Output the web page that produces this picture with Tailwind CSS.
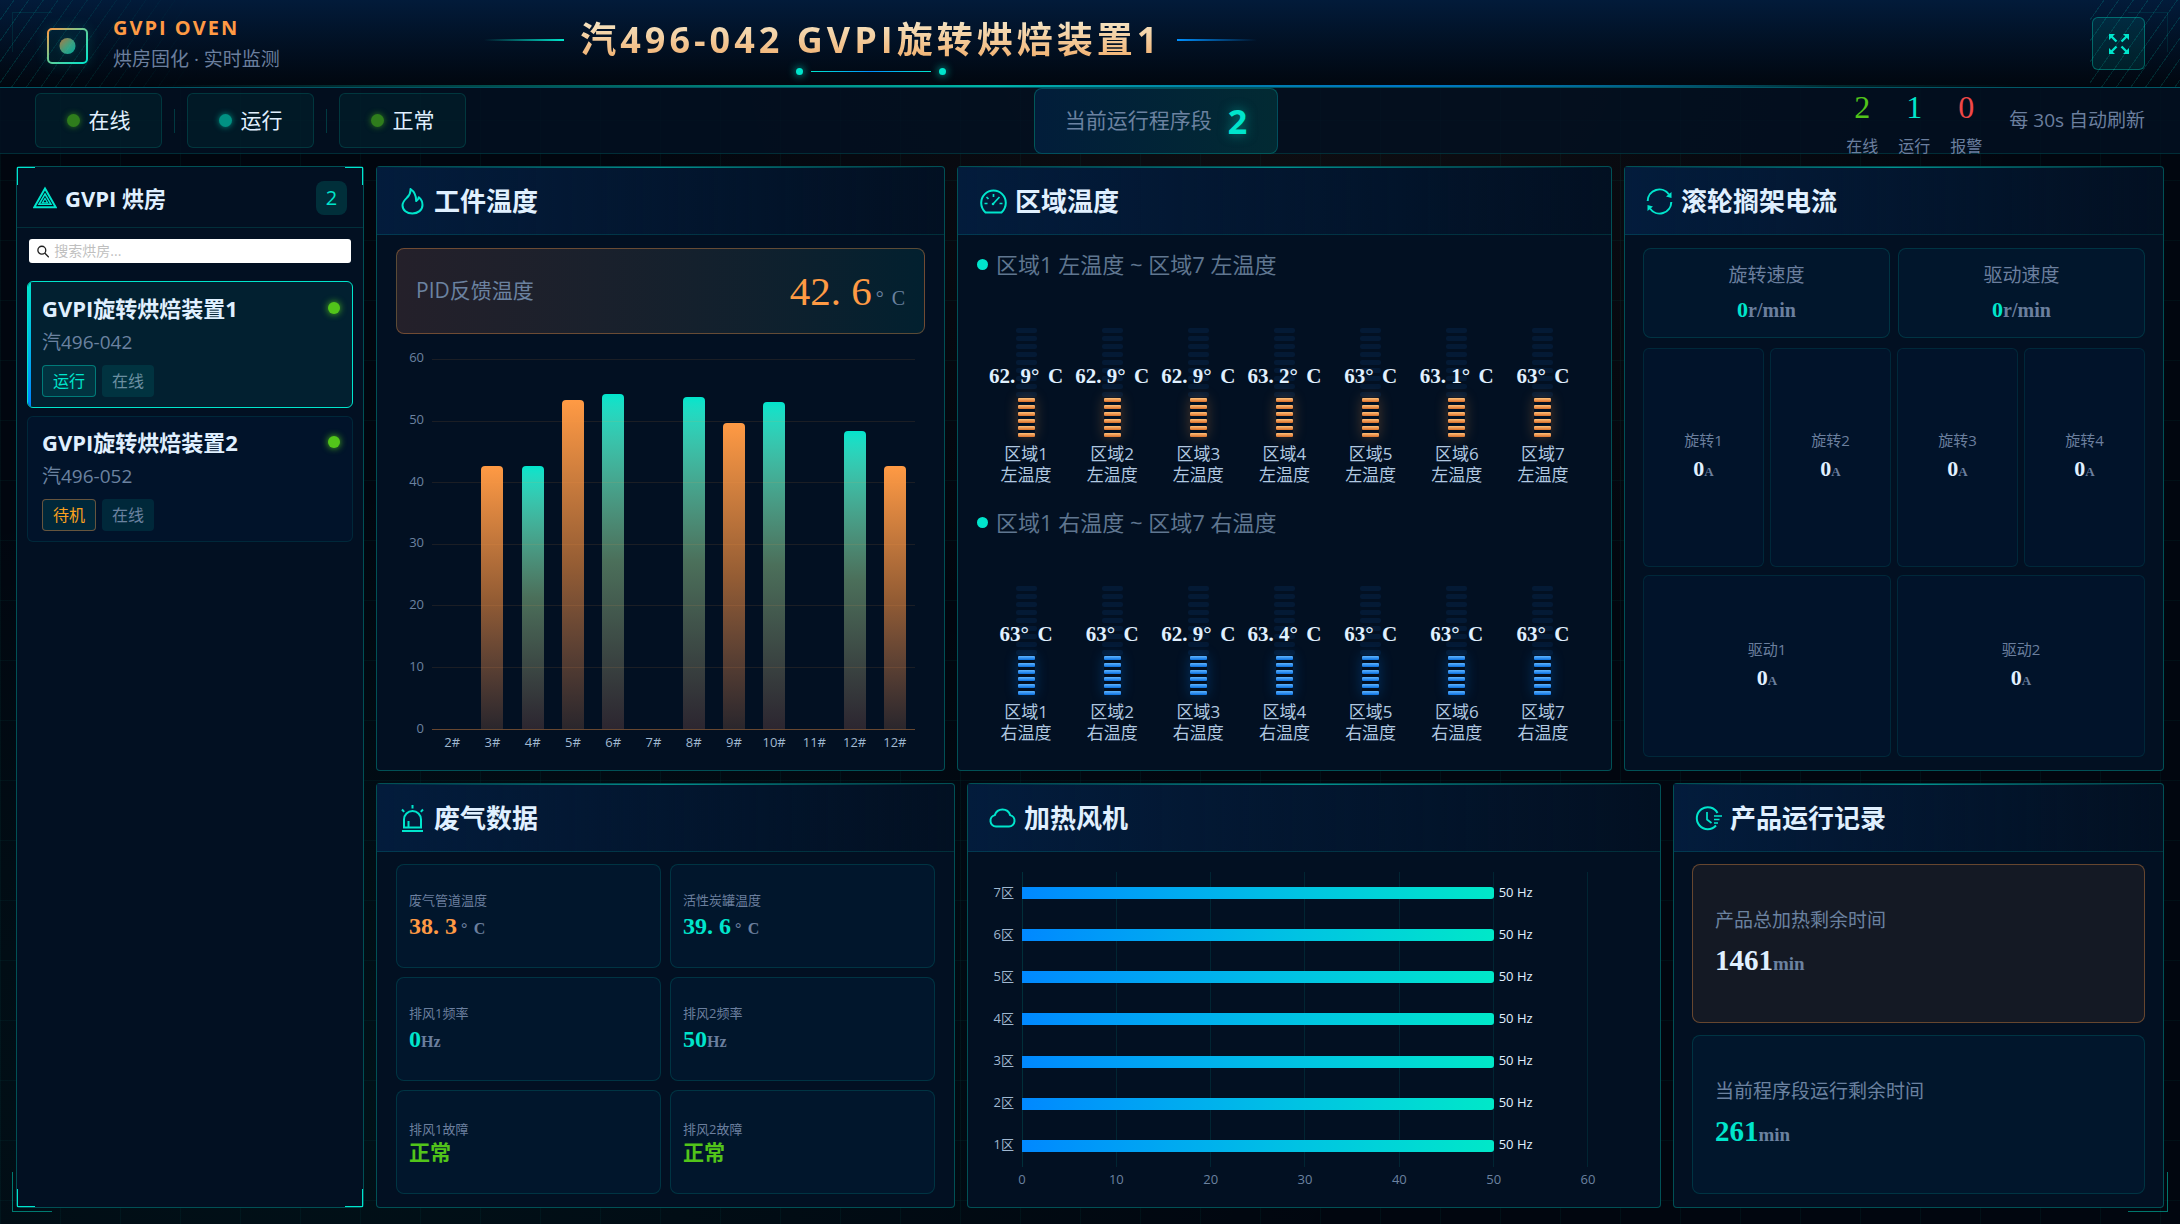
<!DOCTYPE html>
<html lang="zh-CN">
<head>
  <meta charset="UTF-8">
  <meta name="viewport" content="width=device-width, initial-scale=1.0">
  <title>GVPI 烘房固化 · 实时监测</title>
  <script src="https://cdn.jsdelivr.net/npm/@tailwindcss/browser@4"></script>
</head>
<body class="relative flex min-h-screen flex-col overflow-x-hidden bg-[#01060f] bg-[linear-gradient(rgba(0,229,204,0.045)_1px,transparent_1px),linear-gradient(90deg,rgba(0,229,204,0.045)_1px,transparent_1px),radial-gradient(ellipse_at_15%_90%,rgba(0,229,204,0.05),transparent_40%),radial-gradient(ellipse_at_60%_0%,rgba(255,154,68,0.06),transparent_40%)] bg-[size:60px_60px,60px_60px,100%_100%,100%_100%] font-['Open_Sans','Noto_Sans_CJK_SC',sans-serif] text-[#e0f0ff]">

  <!-- Header -->
  <header class="relative grid h-[88px] shrink-0 grid-cols-[33fr_auto_67fr] items-center border-b border-[#00e5cc]/30 bg-gradient-to-b from-[#021b3a] to-[#01070f] pr-[35px] pl-[47px]">
    <div class="absolute inset-y-0 left-0 w-[200px] bg-[repeating-linear-gradient(125deg,transparent_0_11px,rgba(0,229,204,0.14)_11px_12px)] [mask-image:linear-gradient(90deg,#000,transparent)]"></div>
    <div class="absolute inset-y-0 right-0 w-[90px] bg-[repeating-linear-gradient(125deg,transparent_0_11px,rgba(0,229,204,0.14)_11px_12px)]"></div>
    <div class="absolute inset-x-[7%] bottom-0 h-[2px] bg-gradient-to-r from-transparent via-[#00b8a9] via-45% to-transparent"></div>
    <div class="absolute right-[16%] bottom-0 left-[45%] h-[2px] bg-gradient-to-r from-transparent via-[#0077c8] to-transparent"></div>

    <div class="relative flex items-center gap-[25px]">
      <svg class="mt-1 h-[36px] w-[41px] drop-shadow-[0_0_6px_rgba(0,229,204,0.4)]" viewBox="0 0 41 36" fill="none">
        <defs>
          <linearGradient id="logo" x1="0" y1="0" x2="1" y2="1">
            <stop offset="0" stop-color="#ff9a44"/>
            <stop offset="0.5" stop-color="#5fcf9a"/>
            <stop offset="1" stop-color="#00e5cc"/>
          </linearGradient>
        </defs>
        <rect x="1" y="1" width="39" height="34" rx="4" stroke="url(#logo)" stroke-width="2"/>
        <circle cx="20.500" cy="18" r="8" fill="url(#logo)" opacity="0.7"/>
      </svg>
      <div class="pt-[2px]">
        <div class="text-[20px] leading-[28px] font-bold tracking-[2px] text-[#ff9a44]">GVPI OVEN</div>
        <div class="text-[19px] leading-[34px] text-[#6b7f9e]">烘房固化 · 实时监测</div>
      </div>
    </div>

    <div class="relative flex h-full flex-col items-center">
      <div class="mt-[15px] flex items-center gap-4">
        <span class="h-[2px] w-[80px] bg-gradient-to-r from-transparent to-[#00e5cc]"></span>
        <h1 class="bg-gradient-to-b from-[#f4ecd0] to-[#f0a860] bg-clip-text text-[36px] leading-[50px] font-bold tracking-[4px] text-transparent">汽496-042 GVPI旋转烘焙装置1</h1>
        <span class="h-[2px] w-[80px] bg-gradient-to-r from-[#0090ff] to-transparent"></span>
      </div>
      <div class="mt-[3px] flex items-center gap-2">
        <span class="size-[7px] rounded-full bg-[#00e5cc] shadow-[0_0_8px_#00e5cc]"></span>
        <span class="h-px w-[120px] bg-gradient-to-r from-[#00e5cc] via-[#0090ff] to-[#00e5cc]"></span>
        <span class="size-[7px] rounded-full bg-[#00e5cc] shadow-[0_0_8px_#00e5cc]"></span>
      </div>
    </div>

    <button type="button" aria-label="全屏" class="relative flex size-[53px] items-center justify-center justify-self-end rounded-md border border-[#00e5cc]/35 bg-[#00e5cc]/10 text-[#00e5cc]">
      <svg class="size-[22px]" viewBox="0 0 22 22" fill="currentColor" stroke="currentColor" stroke-width="2.400">
        <path d="M3.500 3.500l5 5M18.500 3.500l-5 5M3.500 18.500l5-5M18.500 18.500l-5-5" fill="none"/>
        <path d="M1 1h6L1 7zM21 1v6l-6-6zM1 21v-6l6 6zM21 21h-6l6-6z" stroke="none"/>
      </svg>
    </button>
  </header>

  <!-- Status bar -->
  <section class="grid h-[66px] shrink-0 grid-cols-[1fr_auto_1fr] grid-rows-[65px] items-center border-b border-[#00e5cc]/15 bg-[#021022]/80 px-[35px]">
    <div class="flex items-center gap-3">
      <div class="flex h-[55px] w-[127px] items-center justify-center gap-[9px] rounded-md border border-[#00e5cc]/15 bg-[#00e5cc]/5 text-[21px]">
        <span class="size-[13px] rounded-full bg-[#2f7d1c] shadow-[0_0_6px_#2f7d1c]"></span>在线
      </div>
      <span class="h-6 w-px bg-[#00e5cc]/20"></span>
      <div class="flex h-[55px] w-[127px] items-center justify-center gap-[9px] rounded-md border border-[#00e5cc]/15 bg-[#00e5cc]/5 text-[21px]">
        <span class="size-[13px] rounded-full bg-[#019183] shadow-[0_0_6px_#019183]"></span>运行
      </div>
      <span class="h-6 w-px bg-[#00e5cc]/20"></span>
      <div class="flex h-[55px] w-[127px] items-center justify-center gap-[9px] rounded-md border border-[#00e5cc]/15 bg-[#00e5cc]/5 text-[21px]">
        <span class="size-[13px] rounded-full bg-[#2f7d1c] shadow-[0_0_6px_#2f7d1c]"></span>正常
      </div>
    </div>

    <div class="ml-[132px] flex h-[66px] w-[244px] items-center justify-center gap-4 rounded-lg border border-[#00e5cc]/25 bg-gradient-to-r from-[#021d3a] to-[#022a33]">
      <span class="text-[21px] text-[#6b82a0]">当前运行程序段</span>
      <span class="text-[34px] leading-none font-bold text-[#00e5cc] [text-shadow:0_0_12px_rgba(0,229,204,0.5)]">2</span>
    </div>

    <div class="flex items-center justify-end gap-[27px]">
      <div class="flex gap-5 text-center">
        <div>
          <div class="font-['Liberation_Serif',serif] text-[32px] leading-[50px] text-[#52c41a]">2</div>
          <div class="text-[16px] leading-[28px] text-[#6b7f9e]">在线</div>
        </div>
        <div>
          <div class="font-['Liberation_Serif',serif] text-[32px] leading-[50px] text-[#00e5cc]">1</div>
          <div class="text-[16px] leading-[28px] text-[#6b7f9e]">运行</div>
        </div>
        <div>
          <div class="font-['Liberation_Serif',serif] text-[32px] leading-[50px] text-[#f04848]">0</div>
          <div class="text-[16px] leading-[28px] text-[#6b7f9e]">报警</div>
        </div>
      </div>
      <span class="text-[19px] text-[#6b7f9e]">每 30s 自动刷新</span>
    </div>
  </section>

  <main class="flex flex-1 gap-3 px-4 pt-3 pb-4">

    <!-- Sidebar -->
    <aside class="relative flex w-[348px] shrink-0 flex-col rounded border border-[#00e5cc]/30 bg-[#021022]">
      <span class="absolute top-0 left-0 size-[18px] border-t border-l border-[#00e5cc]"></span>
      <span class="absolute top-0 right-0 size-[18px] border-t border-r border-[#00e5cc]"></span>
      <span class="absolute bottom-0 left-0 size-[18px] border-b border-l border-[#00e5cc]"></span>
      <span class="absolute right-0 bottom-0 size-[18px] border-r border-b border-[#00e5cc]"></span>
      <div class="flex h-[61px] items-center gap-2 border-b border-[#00e5cc]/15 px-4 pt-[2px]">
        <svg class="size-6" viewBox="0 0 24 24" fill="none" stroke="#00e5cc">
          <path d="M12 2.500L22.700 21.200H1.300z" stroke-width="2"/>
          <path d="M12 8l6 10.300H6z" stroke-width="1.500"/>
          <path d="M12 12.500l2.600 4.300H9.400z" stroke-width="1.300"/>
        </svg>
        <h2 class="text-[22px] font-bold">GVPI 烘房</h2>
        <span class="ml-auto flex h-[34px] w-[31px] items-center justify-center rounded-lg bg-[#00e5cc]/15 text-[20px] text-[#00e5cc]">2</span>
      </div>
      <label class="mx-3 mt-[11px] flex h-6 items-center gap-[5px] rounded-[3px] bg-white pl-2">
        <svg class="size-[13px]" viewBox="0 0 14 14" fill="none" stroke="#1f1f1f" stroke-width="1.500">
          <circle cx="5.500" cy="5.500" r="4.500"/>
          <path d="M9 9l4.500 4.500"/>
        </svg>
        <input type="search" aria-label="搜索烘房" placeholder="搜索烘房..." class="w-full bg-transparent text-[14px] leading-5 text-gray-800 outline-none placeholder:text-[#bfbfbf]">
      </label>

      <div class="mx-[10px] mt-[18px] flex flex-col gap-2">
        <a href="#" class="relative block h-[127px] overflow-hidden rounded-md border border-[#00e5cc] bg-[#022030] pt-[9px] pr-[12px] pl-[14px]">
          <span class="absolute inset-y-0 left-0 w-[3px] bg-gradient-to-b from-[#00e5cc] to-[#0080ff]"></span>
          <div class="flex items-center justify-between">
            <span class="text-[22px] leading-[34px] font-bold">GVPI旋转烘焙装置1</span>
            <span class="size-3 rounded-full bg-[#52c41a] shadow-[0_0_7px_#52c41a]"></span>
          </div>
          <div class="text-[19px] leading-[34px] text-[#6b82a0]">汽496-042</div>
          <div class="mt-[6px] flex gap-[6px] text-[16px]">
            <span class="flex h-8 w-[54px] items-center justify-center rounded border border-[#00e5cc]/40 bg-[#00e5cc]/10 text-[#00e5cc]">运行</span>
            <span class="flex h-8 w-[52px] items-center justify-center rounded bg-[#00e5cc]/10 text-[#6b8fa0]">在线</span>
          </div>
        </a>
        <a href="#" class="relative block h-[126px] rounded-md border border-[#00e5cc]/10 bg-[#01132a] pt-[8px] pr-[12px] pl-[14px]">
          <div class="flex items-center justify-between">
            <span class="text-[22px] leading-[34px] font-bold">GVPI旋转烘焙装置2</span>
            <span class="size-3 rounded-full bg-[#52c41a] shadow-[0_0_7px_#52c41a]"></span>
          </div>
          <div class="text-[19px] leading-[34px] text-[#6b82a0]">汽496-052</div>
          <div class="mt-[6px] flex gap-[6px] text-[16px]">
            <span class="flex h-8 w-[54px] items-center justify-center rounded border border-[#ff9a44]/40 bg-[#00e5cc]/10 text-[#faa01e]">待机</span>
            <span class="flex h-8 w-[52px] items-center justify-center rounded bg-[#00e5cc]/10 text-[#6b82a0]">在线</span>
          </div>
        </a>
      </div>
    </aside>

    <div class="grid min-w-0 flex-1 grid-rows-[605fr_425fr] gap-3">
      <div class="grid grid-cols-[569fr_655fr_540fr] gap-3">

        <!-- Workpiece temperature -->
        <section class="relative flex min-w-0 flex-col rounded border border-[#00e5cc]/30 bg-[#021022]">
          <span class="absolute inset-x-0 top-0 h-px bg-gradient-to-r from-transparent via-[#00e5cc]/60 to-transparent"></span>
          <header class="flex h-[68px] items-center gap-2 border-b border-[#00e5cc]/15 bg-gradient-to-r from-[#031c3c] to-transparent px-[22px] pt-[2px]">
            <svg class="size-[27px]" viewBox="0 0 27 27" fill="none" stroke="#00e5cc" stroke-width="2" stroke-linejoin="round">
              <path d="M11.500 1c.4 4.200-1.200 6.400-3.600 8.800C5.300 12.300 3.500 14 3.500 17.200c0 5 4.300 8.300 9.900 8.300s10.100-3.500 10.100-8.600c0-3.200-1.500-6-3.700-7.700-.3 1.700-1 3-2.600 3.800C17.200 8 15.300 3.500 11.500 1z"/>
            </svg>
            <h2 class="text-[26px] font-bold">工件温度</h2>
          </header>
          <div class="flex flex-1 flex-col px-[19px] pt-[13px] pb-[18px]">
            <div class="flex h-[86px] items-center justify-between rounded-lg border border-[#ff9a44]/35 bg-gradient-to-r from-[#24202a] to-[#02202f] px-[19px]">
              <span class="text-[21px] text-[#6b82a0]">PID反馈温度</span>
              <span class="font-['Liberation_Serif',serif] text-[41px] leading-none text-[#ff9a44]">42<span class="inline-block w-[0.5em]">.</span>6<span class="ml-[4px] text-[20px] text-[#6b82a0]"><span class="inline-block w-[0.8em]">°</span>C</span></span>
            </div>
            <div class="mt-[25px] flex flex-1 gap-2 pr-[10px] pl-[8px]">
              <div class="-mt-[12px] mb-[14px] flex w-[20px] flex-col justify-between text-right text-[13px] leading-5 text-[#6b82a0]">
                <span>60</span><span>50</span><span>40</span><span>30</span><span>20</span><span>10</span><span>0</span>
              </div>
              <div class="flex min-w-0 flex-1 flex-col">
                <div class="relative flex-1 border-b border-[#ff9a44]/40">
                  <div id="tempBars" class="grid h-full grid-cols-12"></div>
                  <div class="absolute inset-0 flex flex-col justify-between">
                    <i class="h-px bg-[#ff9a44]/10"></i><i class="h-px bg-[#ff9a44]/10"></i><i class="h-px bg-[#ff9a44]/10"></i><i class="h-px bg-[#ff9a44]/10"></i><i class="h-px bg-[#ff9a44]/10"></i><i class="h-px bg-[#ff9a44]/10"></i><i class="h-px"></i>
                  </div>
                </div>
                <div id="tempNames" class="grid h-[22px] grid-cols-12 pt-[2px] text-center text-[13px] leading-5 text-[#a0b8d0]"></div>
              </div>
            </div>
          </div>
        </section>

        <!-- Zone temperature -->
        <section class="relative flex min-w-0 flex-col rounded border border-[#00e5cc]/30 bg-[#021022]">
          <span class="absolute inset-x-0 top-0 h-px bg-gradient-to-r from-transparent via-[#00e5cc]/60 to-transparent"></span>
          <header class="flex h-[68px] items-center gap-2 border-b border-[#00e5cc]/15 bg-gradient-to-r from-[#031c3c] to-transparent px-[22px] pt-[2px]">
            <svg class="size-[27px]" viewBox="0 0 27 27" fill="none" stroke="#00e5cc" stroke-width="2" stroke-linejoin="round">
              <path d="M5.500 24.500C2.800 22 1.200 18.600 1.200 14.800 1.200 8 6.700 2.500 13.500 2.500S25.800 8 25.800 14.800c0 3.800-1.600 7.200-4.300 9.700z"/>
              <path d="M13.500 6v3M6.500 9l2 2M4.500 15.500h3M19.500 15.500h3M13 16l6.500-7" stroke-width="1.700"/>
              <circle cx="13" cy="16" r="1.300" fill="#00e5cc" stroke="none"/>
            </svg>
            <h2 class="text-[26px] font-bold">区域温度</h2>
          </header>
          <div class="flex flex-1 flex-col px-[19px] pt-[13px] pb-[6px]">
            <div class="flex flex-1 flex-col">
              <h3 class="flex h-[33px] items-center gap-2 text-[22px] text-[#5f7690]"><span class="size-[11px] rounded-full bg-[#00e5cc]"></span>区域1 左温度 ~ 区域7 左温度</h3>
              <div id="leftZones" class="grid flex-1 grid-cols-7 items-end px-[6px] pb-[21px]"></div>
            </div>
            <div class="flex flex-1 flex-col">
              <h3 class="flex h-[33px] items-center gap-2 text-[22px] text-[#5f7690]"><span class="size-[11px] rounded-full bg-[#00e5cc]"></span>区域1 右温度 ~ 区域7 右温度</h3>
              <div id="rightZones" class="grid flex-1 grid-cols-7 items-end px-[6px] pb-[21px]"></div>
            </div>
          </div>
        </section>

        <!-- Roller current -->
        <section class="relative flex min-w-0 flex-col rounded border border-[#00e5cc]/30 bg-[#021022]">
          <span class="absolute inset-x-0 top-0 h-px bg-gradient-to-r from-transparent via-[#00e5cc]/60 to-transparent"></span>
          <header class="flex h-[68px] items-center gap-2 border-b border-[#00e5cc]/15 bg-gradient-to-r from-[#031c3c] to-transparent px-[21px] pt-[2px]">
            <svg class="size-[27px]" viewBox="0 0 27 27" fill="none" stroke="#00e5cc" stroke-width="2">
              <path d="M1.700 13A11.700 11.700 0 0 1 23 6.500M25.300 14A11.700 11.700 0 0 1 4 20.500"/>
              <path d="M25.500 4v6l-5.500-1.500zM1.500 23v-6L7 18.500z" fill="#00e5cc" stroke="none"/>
            </svg>
            <h2 class="text-[26px] font-bold">滚轮搁架电流</h2>
          </header>
          <div class="flex flex-1 flex-col px-[18px] pt-[13px] pb-[13px]">
            <div class="mb-[10px] grid h-[90px] grid-cols-2 gap-2 text-center">
              <div class="rounded-lg border border-[#00e5cc]/15 bg-[#01162c] pt-[10px]">
                <div class="text-[19px] leading-[32px] text-[#6b7f9e]">旋转速度</div>
                <div class="font-['Liberation_Serif',serif] text-[22px] leading-[38px] font-bold text-[#00e5cc]">0<span class="text-[20px] text-[#6b7f9e]">r/min</span></div>
              </div>
              <div class="rounded-lg border border-[#00e5cc]/15 bg-[#01162c] pt-[10px]">
                <div class="text-[19px] leading-[32px] text-[#6b7f9e]">驱动速度</div>
                <div class="font-['Liberation_Serif',serif] text-[22px] leading-[38px] font-bold text-[#00e5cc]">0<span class="text-[20px] text-[#6b7f9e]">r/min</span></div>
              </div>
            </div>
            <div id="currents" class="grid flex-1 grid-cols-4 grid-rows-[220fr_182fr] gap-x-[6px] gap-y-2"></div>
          </div>
        </section>
      </div>

      <div class="grid grid-cols-[579fr_694fr_491fr] gap-3">

        <!-- Exhaust -->
        <section class="relative flex min-w-0 flex-col rounded border border-[#00e5cc]/30 bg-[#021022]">
          <span class="absolute inset-x-0 top-0 h-px bg-gradient-to-r from-transparent via-[#00e5cc]/60 to-transparent"></span>
          <header class="flex h-[68px] items-center gap-2 border-b border-[#00e5cc]/15 bg-gradient-to-r from-[#031c3c] to-transparent px-[22px] pt-[2px]">
            <svg class="size-[27px]" viewBox="0 0 27 27" fill="none" stroke="#00e5cc" stroke-width="2">
              <path d="M5 22.500V14.500a8.500 8.500 0 0 1 17 0v8z"/>
              <path d="M3 25.900h21M13.500 0v3.500M3 4.500l2.200 2.400M24 4.500l-2.200 2.400M9.500 22.500V16"/>
            </svg>
            <h2 class="text-[26px] font-bold">废气数据</h2>
          </header>
          <div class="grid flex-1 grid-cols-2 grid-rows-3 gap-[9px] px-[19px] pt-[12px] pb-[13px]">
            <div class="flex flex-col justify-center rounded-lg border border-[#00e5cc]/15 bg-[#01162c] px-3">
              <div class="text-[13px] leading-[22px] text-[#6b7f9e]">废气管道温度</div>
              <div class="font-['Liberation_Serif',serif] text-[24px] leading-[30px] font-bold text-[#ff9a44]">38<span class="inline-block w-[0.5em]">.</span>3<span class="ml-1 text-[16px] text-[#6b7f9e]"><span class="inline-block w-[0.8em]">°</span>C</span></div>
            </div>
            <div class="flex flex-col justify-center rounded-lg border border-[#00e5cc]/15 bg-[#01162c] px-3">
              <div class="text-[13px] leading-[22px] text-[#6b7f9e]">活性炭罐温度</div>
              <div class="font-['Liberation_Serif',serif] text-[24px] leading-[30px] font-bold text-[#00e5cc]">39<span class="inline-block w-[0.5em]">.</span>6<span class="ml-1 text-[16px] text-[#6b7f9e]"><span class="inline-block w-[0.8em]">°</span>C</span></div>
            </div>
            <div class="flex flex-col justify-center rounded-lg border border-[#00e5cc]/15 bg-[#01162c] px-3">
              <div class="text-[13px] leading-[22px] text-[#6b7f9e]">排风1频率</div>
              <div class="font-['Liberation_Serif',serif] text-[24px] leading-[30px] font-bold text-[#00e5cc]">0<span class="text-[16px] text-[#6b7f9e]">Hz</span></div>
            </div>
            <div class="flex flex-col justify-center rounded-lg border border-[#00e5cc]/15 bg-[#01162c] px-3">
              <div class="text-[13px] leading-[22px] text-[#6b7f9e]">排风2频率</div>
              <div class="font-['Liberation_Serif',serif] text-[24px] leading-[30px] font-bold text-[#00e5cc]">50<span class="text-[16px] text-[#6b7f9e]">Hz</span></div>
            </div>
            <div class="flex flex-col justify-center rounded-lg border border-[#00e5cc]/15 bg-[#01162c] px-3 pb-[2px]">
              <div class="text-[13px] leading-[22px] text-[#6b7f9e]">排风1故障</div>
              <div class="text-[21px] leading-[24px] font-bold text-[#52c41a]">正常</div>
            </div>
            <div class="flex flex-col justify-center rounded-lg border border-[#00e5cc]/15 bg-[#01162c] px-3 pb-[2px]">
              <div class="text-[13px] leading-[22px] text-[#6b7f9e]">排风2故障</div>
              <div class="text-[21px] leading-[24px] font-bold text-[#52c41a]">正常</div>
            </div>
          </div>
        </section>

        <!-- Heating fans -->
        <section class="relative flex min-w-0 flex-col rounded border border-[#00e5cc]/30 bg-[#021022]">
          <span class="absolute inset-x-0 top-0 h-px bg-gradient-to-r from-transparent via-[#00e5cc]/60 to-transparent"></span>
          <header class="flex h-[68px] items-center gap-2 border-b border-[#00e5cc]/15 bg-gradient-to-r from-[#031c3c] to-transparent px-[21px] pt-[2px]">
            <svg class="size-[27px]" viewBox="0 0 27 27" fill="none" stroke="#00e5cc" stroke-width="2">
              <path d="M7 21.500a5.800 5.800 0 0 1-1.200-11.400C7 6.500 9.900 4.500 13.500 4.500s6.500 2 7.700 5.600A5.800 5.800 0 0 1 20 21.500z"/>
            </svg>
            <h2 class="text-[26px] font-bold">加热风机</h2>
          </header>
          <div class="flex flex-1 flex-col pt-5 pr-[72px] pb-[18px] pl-[18px]">
            <div class="relative flex-1">
              <div class="absolute inset-y-0 right-0 left-[36px] flex justify-between">
                <i class="w-px bg-[#00e5cc]/15"></i><i class="w-px bg-[#00e5cc]/10"></i><i class="w-px bg-[#00e5cc]/10"></i><i class="w-px bg-[#00e5cc]/10"></i><i class="w-px bg-[#00e5cc]/10"></i><i class="w-px bg-[#00e5cc]/10"></i><i class="w-px bg-[#00e5cc]/10"></i>
              </div>
              <div id="fans" class="relative flex h-full flex-col"></div>
            </div>
            <div class="-mr-[10px] ml-[26px] flex h-[22px] justify-between pt-[2px] text-center text-[13px] leading-5 text-[#6b82a0]">
              <span class="w-5">0</span><span class="w-5">10</span><span class="w-5">20</span><span class="w-5">30</span><span class="w-5">40</span><span class="w-5">50</span><span class="w-5">60</span>
            </div>
          </div>
        </section>

        <!-- Run records -->
        <section class="relative flex min-w-0 flex-col rounded border border-[#00e5cc]/30 bg-[#021022]">
          <span class="absolute inset-x-0 top-0 h-px bg-gradient-to-r from-transparent via-[#00e5cc]/60 to-transparent"></span>
          <header class="flex h-[68px] items-center gap-2 border-b border-[#00e5cc]/15 bg-gradient-to-r from-[#031c3c] to-transparent px-[21px] pt-[2px]">
            <svg class="size-[27px]" viewBox="0 0 27 27" fill="none" stroke="#00e5cc" stroke-width="2">
              <path d="M22.500 8A11 11 0 1 0 21 20.500"/>
              <path d="M12 7v7.500l4.500 3.500M19 11h8M19 14.500h5.500M19 18h4" stroke-width="1.700"/>
            </svg>
            <h2 class="text-[26px] font-bold">产品运行记录</h2>
          </header>
          <div class="grid flex-1 grid-rows-2 gap-3 px-[18px] pt-[12px] pb-[13px]">
            <div class="flex flex-col justify-center rounded-lg border border-[#ff9a44]/35 bg-[#141924] px-[22px] pt-[2px]">
              <div class="text-[19px] leading-[34px] text-[#6b82a0]">产品总加热剩余时间</div>
              <div class="font-['Liberation_Serif',serif] text-[29px] leading-[46px] font-bold">1461<span class="text-[19px] text-[#6b82a0]">min</span></div>
            </div>
            <div class="flex flex-col justify-center rounded-lg border border-[#00e5cc]/15 bg-[#01162c] px-[22px] pt-[2px]">
              <div class="text-[19px] leading-[34px] text-[#6b82a0]">当前程序段运行剩余时间</div>
              <div class="font-['Liberation_Serif',serif] text-[29px] leading-[46px] font-bold text-[#00e5cc]">261<span class="text-[19px] text-[#6b82a0]">min</span></div>
            </div>
          </div>
        </section>
      </div>
    </div>
  </main>

  <!-- Page corners -->
  <span class="absolute top-3 left-3 size-10 border-t border-l border-[#00e5cc]/10"></span>
  <span class="absolute top-3 right-3 size-10 border-t border-r border-[#00e5cc]/10"></span>
  <span class="absolute bottom-3 left-3 size-10 border-b border-l border-[#00e5cc]/50"></span>
  <span class="absolute right-3 bottom-3 size-10 border-r border-b border-[#00e5cc]/50"></span>

  <script>
    const workpieces = [
      ['2#', 0], ['3#', 42.7], ['4#', 42.6], ['5#', 53.4], ['6#', 54.3], ['7#', 0],
      ['8#', 53.8], ['9#', 49.7], ['10#', 53], ['11#', 0], ['12#', 48.4], ['12#', 42.7]
    ];
    const leftTemps = ['62.9', '62.9', '62.9', '63.2', '63', '63.1', '63'];
    const rightTemps = ['63', '63', '62.9', '63.4', '63', '63', '63'];

    // Column chart, y axis runs 0 - 60
    document.getElementById('tempBars').innerHTML = workpieces.map(([name, value], i) => {
      const color = i % 2
        ? 'from-[#ff9a44] via-[#955d34] to-[#2a262c]'
        : 'from-[#00e5cc] via-[#4b6f5a] to-[#2c2630]';
      return `<div class="flex items-end justify-center"><div class="w-[22px] rounded-t-[4px] bg-gradient-to-b ${color}" style="height: ${value / 60 * 100}%"></div></div>`;
    }).join('');
    document.getElementById('tempNames').innerHTML = workpieces.map(([name]) => `<span>${name}</span>`).join('');

    // Digits and the point share one column width
    function digits(value) {
      return value.replace('.', '<span class="inline-block w-[0.5em]">.</span>');
    }

    function renderZones(id, temps, side, lit) {
      document.getElementById(id).innerHTML = temps.map((t, i) => `
        <div class="flex flex-col items-center">
          <div class="relative flex flex-col items-center">
            <div class="flex flex-col gap-[3px] pb-px">
              ${'<i class="h-[5px] w-[21px] rounded-[2px] bg-[#041a35]"></i>'.repeat(9)}
            </div>
            <div class="absolute top-[36px] font-['Liberation_Serif',serif] text-[21px] leading-6 font-bold whitespace-nowrap">${digits(t)}<span class="inline-block w-[0.8em]">°</span>C</div>
            <div class="flex flex-col gap-[3px] ${lit.glow}">
              ${`<i class="h-[4px] w-[17px] rounded-[1px] bg-gradient-to-b ${lit.bar}"></i>`.repeat(6)}
            </div>
          </div>
          <div class="mt-[6px] text-center text-[17px] leading-[21px] text-[#b0c8e0]">区域${i + 1}<br>${side}温度</div>
        </div>`).join('');
    }
    renderZones('leftZones', leftTemps, '左', { bar: 'from-[#ffc078] to-[#d9702a]', glow: 'shadow-[0_0_14px_rgba(255,154,68,0.28)]' });
    renderZones('rightZones', rightTemps, '右', { bar: 'from-[#5cb4ff] to-[#0070e0]', glow: 'shadow-[0_0_14px_rgba(0,128,255,0.28)]' });

    const currents = ['旋转1', '旋转2', '旋转3', '旋转4', '驱动1', '驱动2'];
    document.getElementById('currents').innerHTML = currents.map((name, i) => `
      <div class="flex flex-col items-center justify-center gap-[2px] rounded-md border border-[#00e5cc]/10 bg-[#01132a] pt-[2px] ${i > 3 ? 'col-span-2' : ''}">
        <div class="text-[15px] leading-[22px] text-[#6b7f9e]">${name}</div>
        <div class="font-['Liberation_Serif',serif] text-[22px] leading-8 font-bold">0<span class="text-[13px] text-[#6b7f9e]">A</span></div>
      </div>`).join('');

    // Fan frequency, x axis runs 0 - 60 Hz
    document.getElementById('fans').innerHTML = [7, 6, 5, 4, 3, 2, 1].map(n => `
      <div class="flex flex-1 items-center gap-2 text-[13px] leading-5">
        <span class="w-[28px] pb-[3px] text-right text-[#a0b8d0]">${n}区</span>
        <div class="flex flex-1 items-center">
          <div class="h-3 rounded-r-[3px] bg-gradient-to-r from-[#0088ff] to-[#00e8c8]" style="width: ${50 / 60 * 100}%"></div>
          <span class="ml-[5px] pb-[3px]">50 Hz</span>
        </div>
      </div>`).join('');
  </script>
</body>
</html>
